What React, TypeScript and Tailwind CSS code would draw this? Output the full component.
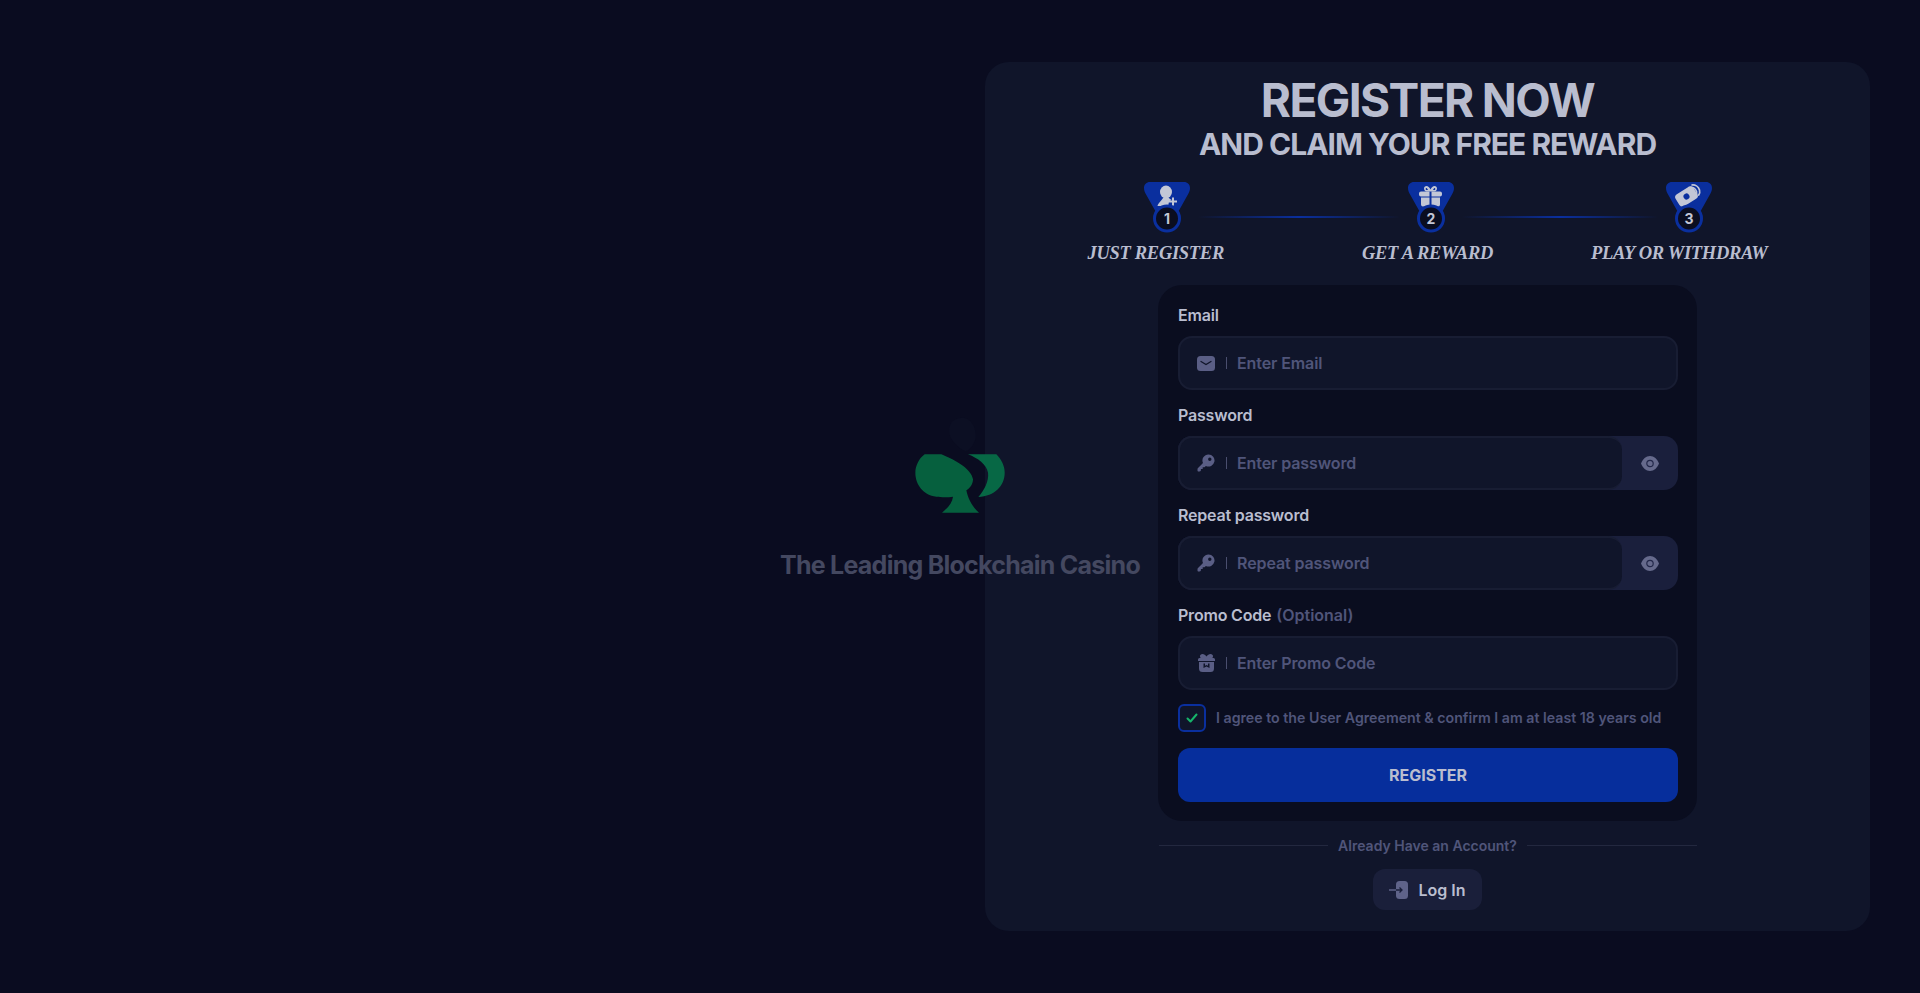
import React from "react";

const Mail = () => (
  <svg width="18" height="15" viewBox="0 0 18 15"><rect width="18" height="15" rx="3.500" fill="#5a5e85" /><path d="M4 5.500 9 8.500l5-3" stroke="#10152a" strokeWidth="1.300" fill="none" strokeLinecap="round" /></svg>
);
const Key = () => (
  <svg width="18" height="18" viewBox="0 0 18 18"><path fill="#5a5e85" fillRule="evenodd" d="M11.500.5a6 6 0 1 1-2.600 11.400L7.500 13.300H5.700v1.800H3.900v1.400c-.3.600-.8 1-1.500 1H1.600c-.7 0-1.100-.5-1.100-1.100v-1.100c0-.5.2-.9.5-1.200l5-5A6 6 0 0 1 11.500.5Zm1.300 3a1.700 1.700 0 1 0 0 3.400 1.700 1.700 0 0 0 0-3.400Z" /></svg>
);
const Gift = () => (
  <svg width="17" height="18" viewBox="0 0 17 18">
    <g fill="#5a5e85">
      <path d="M4.500 0C6 0 7.500 1 8.500 2.600 9.500 1 11 0 12.500 0 14 0 15 1 15 2.200c0 .7-.3 1.300-.7 1.800h1.200A1.500 1.500 0 0 1 17 5.500V7H0V5.500A1.500 1.500 0 0 1 1.500 4h1.200C2.300 3.500 2 2.900 2 2.200 2 1 3 0 4.500 0Z" />
      <path fillRule="evenodd" d="M1 8h15v6.500a3.500 3.500 0 0 1-3.500 3.500h-8A3.500 3.500 0 0 1 1 14.500V8Zm4.500 1.500v4.500l3-1.500 3 1.500V9.500H10v2.200l-1.500-.7-1.500.7V9.500H5.500Z" />
    </g>
  </svg>
);
const Eye = () => (
  <svg width="18" height="15" viewBox="0 0 18 15"><path d="M9 0c4 0 7.300 3 9 7.500C16.300 12 13 15 9 15S1.700 12 0 7.500C1.700 3 5 0 9 0Z" fill="#666a8c" /><circle cx="9" cy="7.500" r="3.200" fill="none" stroke="#23284a" strokeWidth="1.200" /></svg>
);
const Badge = ({ n, icon }: { n: string; icon: React.ReactNode }) => (
  <svg width="46" height="52" viewBox="0 0 46 52" className="shrink-0">
    <path d="M6 0h34c3.500 0 6 2.500 6 6 0 2-.6 4-1.800 6L33 32H13L1.800 12C.6 10 0 8 0 6c0-3.500 2.500-6 6-6Z" fill="#0a2f9e" />
    {icon}
    <circle cx="23" cy="36.500" r="12.500" fill="#0a0d20" stroke="#0a2f9e" strokeWidth="3" />
    <text x="23" y="41.500" textAnchor="middle" fontSize="14" fontWeight="700" fill="#c3c7d6" fontFamily="Inter, sans-serif">{n}</text>
  </svg>
);
const UserPlus = (
  <g fill="#c3c7d6">
    <ellipse cx="22" cy="10" rx="6" ry="6.500" />
    <path d="M13.500 24c.5-3 4-5 5.500-8h6c1 1 2 1.500 2.500 2-2 .8-3 2.500-3 4.500l-.2 1.500H13.500Z" />
    <path d="M28 15.500h2v3h3v2h-3v3h-2v-3h-3v-2h3v-3Z" />
  </g>
);
const GiftBig = (
  <g fill="#c3c7d6">
    <path d="M13 9.500h8.500v5H13a2 2 0 0 1-2-2v-1a2 2 0 0 1 2-2ZM23.500 9.500H32a2 2 0 0 1 2 2v1a2 2 0 0 1-2 2h-8.500v-5ZM13 15.500h8.500v9H15a2 2 0 0 1-2-2v-7ZM23.500 15.500H32v7a2 2 0 0 1-2 2h-6.500v-9Z" />
    <path fillRule="evenodd" d="M22.500 7.500C21.500 5.500 20 4 18.500 4 17 4 16 5 16 6.500S17 9.500 18.500 9.500h8c1.500 0 2.500-1.500 2.500-3S28 4 26.500 4C25 4 23.500 5.500 22.500 7.500Zm-2.500.5c-.500-1-1-2-1.500-2-.6 0-.8.500-.8 1s.4 1 .8 1H20Zm5 0h1.500c.4 0 .8-.5.8-1s-.2-1-.8-1c-.5 0-1 1-1.500 2Z" />
  </g>
);
const Money = (
  <g>
    <g transform="rotate(-32 20.500 14.500)">
      <rect x="10" y="7.500" width="21" height="14" rx="3.500" fill="#c3c7d6" />
      <circle cx="20.500" cy="14.500" r="3" fill="#0a2f9e" />
    </g>
    <path d="M23 5.500c3.500-1 6.500 1 7.500 4 .5 2 .2 3.500-.8 5" fill="none" stroke="#c3c7d6" strokeWidth="1.700" strokeLinecap="round" />
    <path d="M26 3c3.500-.3 6.500 2 7.500 5 .5 2 .2 3.500-.8 5" fill="none" stroke="#c3c7d6" strokeWidth="1.700" strokeLinecap="round" />
  </g>
);

const Field = ({ label, hint, placeholder, icon, eye }: { label: string; hint?: string; placeholder: string; icon: React.ReactNode; eye?: boolean }) => (
  <div className="flex flex-col">
    <div className="flex h-[37px] items-start pt-[6px] text-[16px] leading-[20px] font-semibold tracking-[-0.2px] text-[#b9bdcf]">
      {label}
      {hint && <span className="ml-[5px] font-semibold tracking-normal text-[#50557a]">{hint}</span>}
    </div>
    <div className={`flex h-[54px] rounded-[14px] ${eye ? "bg-[#1a1f3c]" : ""}`}>
      <div className={`flex flex-1 items-center rounded-[14px] border-2 border-[#181d33] bg-[#10152a] pl-[17px] ${eye ? "border-r-0" : ""}`}>
        <div className="flex w-[18px] justify-center">{icon}</div>
        <div className="ml-[11px] h-[12px] w-px bg-[#4a4e6e]" />
        <span className="ml-[10px] text-[16px] font-semibold tracking-[-0.1px] text-[#50557a]">{placeholder}</span>
      </div>
      {eye && (
        <div className="flex w-[56px] items-center justify-center"><Eye /></div>
      )}
    </div>
    <div className="h-[9px]" />
  </div>
);

export default function App() {
  return (
    <div className="relative flex h-[993px] w-full items-start justify-end overflow-hidden bg-[#0a0c20] pt-[62px] pr-[50px]" style={{ fontFamily: "Inter, sans-serif" }}>
      <div className="flex h-[869px] w-[885px] flex-col items-center rounded-[24px] bg-[#10152a] pt-[11px]">
        <h1 className="text-[46px] leading-[54px] font-bold tracking-[-1.6px] text-[#b9bdcf]">REGISTER NOW</h1>
        <h2 className="text-[30px] leading-[34px] font-bold tracking-[-1px] text-[#b9bdcf]">AND CLAIM YOUR FREE REWARD</h2>
        <div className="mt-[21px] ml-[159px] flex items-center gap-[8px] self-start">
          <Badge n="1" icon={UserPlus} />
          <div className="mt-[18px] h-[2px] w-[202px] bg-gradient-to-r from-transparent via-[#0a2f9e] to-transparent" />
          <Badge n="2" icon={GiftBig} />
          <div className="mt-[18px] h-[2px] w-[196px] bg-gradient-to-r from-transparent via-[#0a2f9e] to-transparent" />
          <Badge n="3" icon={Money} />
        </div>
        <div className="mt-[7px] flex w-[680px] justify-between text-[18.5px] leading-[24px] font-bold italic tracking-[-0.3px] text-[#b9bdcf]" style={{ fontFamily: "'Liberation Serif', serif" }}>
          <span>JUST REGISTER</span>
          <span className="ml-[40px]">GET A REWARD</span>
          <span>PLAY OR WITHDRAW</span>
        </div>
        <div className="mt-[20px] flex h-[536px] w-[539px] shrink-0 flex-col rounded-[24px] bg-[#0a0d1f] pt-[14px] pr-[19px] pl-[20px]">
          <Field label="Email" placeholder="Enter Email" icon={<Mail />} />
          <Field label="Password" placeholder="Enter password" icon={<Key />} eye />
          <Field label="Repeat password" placeholder="Repeat password" icon={<Key />} eye />
          <Field label="Promo Code" hint="(Optional)" placeholder="Enter Promo Code" icon={<Gift />} />
          <div className="mt-[5px] flex items-center gap-[10px]">
            <div className="flex h-[28px] w-[28px] items-center justify-center rounded-[6px] border-2 border-[#0a2f9e] bg-[#10152a]">
              <svg width="12" height="10" viewBox="0 0 12 10"><path d="M1.500 5.500 4.500 8.500 10.500 1.500" fill="none" stroke="#16b46a" strokeWidth="2" strokeLinecap="round" strokeLinejoin="round" /></svg>
            </div>
            <span className="text-[14.2px] font-semibold text-[#50557a]">I agree to the User Agreement &amp; confirm I am at least 18 years old</span>
          </div>
          <button className="mt-[16px] h-[54px] w-full rounded-[12px] bg-[#062e9c] text-[16px] font-bold text-[#b9bdcf]">REGISTER</button>
        </div>
        <div className="mt-[14px] flex w-[538px] items-center gap-[10px]">
          <div className="h-px flex-1 bg-[#23283f]" />
          <span className="text-[14px] font-semibold text-[#50557a]">Already Have an Account?</span>
          <div className="h-px flex-1 bg-[#23283f]" />
        </div>
        <button className="mt-[13px] flex h-[41px] w-[109px] items-center justify-center gap-[10px] rounded-[12px] bg-[#1a1f3a] text-[16px] font-semibold text-[#b9bdcf]">
          <svg width="19" height="20" viewBox="0 0 19 20"><rect x="7" y="1" width="12" height="18" rx="3.500" fill="#5f6389" /><path d="M0 10h7" stroke="#5f6389" strokeWidth="1.500" /><path d="M7 10h6M10.500 7.500l2.500 2.500-2.500 2.500" stroke="#1a1f3a" strokeWidth="1.300" fill="none" /></svg>
          Log In
        </button>
      </div>
      <div className="absolute top-[416px] left-1/2 flex -translate-x-1/2 flex-col items-center">
        <svg width="95" height="98" viewBox="520 45 285 294" className="translate-x-[1px]">
          <path d="M670 50c20 0 40 25 38 60-4 20-20 40-30 40s-50-30-50-60 20-40 42-40Z" fill="#0c0f23" />
          <path d="M555 160H605C650 178 695 205 700 235C700 250 690 262 680 268C685 295 700 320 718 335H607C625 320 638 305 640 287C620 290 600 288 590 287C550 282 527 250 527 215C527 195 538 172 555 160Z" fill="#06603e" />
          <path d="M685 160H770C785 175 795 195 795 215C795 255 765 285 716 288C735 265 748 240 745 215C740 190 715 172 685 160Z" fill="#076845" />
        </svg>
        <div className="mt-[35px] whitespace-nowrap text-[25px] leading-[32px] font-bold tracking-[-0.75px] text-[#444860]">The Leading Blockchain Casino</div>
      </div>
    </div>
  );
}
